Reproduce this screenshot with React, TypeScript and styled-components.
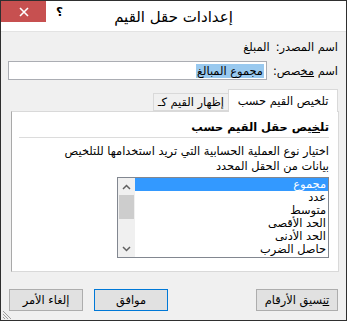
import React from 'react';
import styled, { createGlobalStyle, css } from 'styled-components';

const GlobalStyle = createGlobalStyle`
  html, body {
    margin: 0;
    padding: 0;
    background: #ffffff;
  }
  * {
    box-sizing: border-box;
  }
`;

const fontStack = `"DejaVu Sans", "Noto Sans", sans-serif`;

const Window = styled.div`
  width: 347px;
  height: 321px;
  border: 1px solid #2f2f2f;
  background: #f0f0f0;
  display: flex;
  flex-direction: column;
  font-family: ${fontStack};
  font-size: 11.4px;
  color: #000;
  position: relative;
  overflow: hidden;
`;

const TitleBar = styled.div`
  height: 30px;
  background: #ffffff;
  display: grid;
  grid-template-columns: 1fr auto 1fr;
  align-items: start;
  direction: ltr;
`;

const TitleButtons = styled.div`
  display: flex;
  align-items: flex-start;
`;

const CloseButton = styled.div`
  width: 45px;
  height: 21px;
  background: #c75050;
  display: flex;
  align-items: center;
  justify-content: center;
`;

const HelpButton = styled.div`
  width: 26px;
  height: 21px;
  display: flex;
  align-items: center;
  justify-content: center;
  font-weight: bold;
  font-size: 12px;
  padding-left: 1px;
`;

const Title = styled.div`
  direction: rtl;
  font-size: 15px;
  line-height: 20px;
  margin-top: 6px;
  color: #000;
`;

const Body = styled.div`
  flex: 1;
  direction: rtl;
  display: flex;
  flex-direction: column;
  border-top: 1px solid #e3e3e3;
`;

const Row = styled.div<{ $top: number }>`
  display: flex;
  align-items: center;
  margin-top: ${(p) => p.$top}px;
  padding-right: 8px;
  padding-left: 7px;
  gap: 6px;
  line-height: 14px;
`;

const Label = styled.span`
  white-space: nowrap;
`;

const Mnemonic = styled.span`
  text-decoration: underline;
`;

const TextInput = styled.div`
  flex: 1;
  height: 19px;
  background: #fff;
  border: 1px solid #abadb3;
  display: flex;
  align-items: center;
  padding-right: 2px;
`;

const Selected = styled.span`
  background: #99c9ef;
  line-height: 14px;
  padding: 0 1px;
`;

const TabStrip = styled.div`
  display: flex;
  align-items: flex-end;
  margin-top: 9px;
  padding-right: 8px;
  height: 22px;
  position: relative;
  z-index: 1;
`;

const Tab = styled.div<{ $active?: boolean }>`
  border: 1px solid #d9d9d9;
  border-bottom: none;
  display: flex;
  align-items: center;
  justify-content: center;
  white-space: nowrap;
  ${(p) =>
    p.$active
      ? css`
          width: 110px;
          height: 23px;
          margin-bottom: -1px;
          background: #fff;
        `
      : css`
          width: 75px;
          height: 18px;
          background: #f0f0f0;
          border-color: #d9d9d9;
          border-right: none;
          border-bottom: 1px solid #d9d9d9;
        `}
`;

const Panel = styled.div`
  margin: 0 7px 0 10px;
  height: 161px;
  background: #fff;
  border: 1px solid #d9d9d9;
  border-left-color: #a9a9a9;
  padding: 8px 9px 0 7px;
  display: flex;
  flex-direction: column;
`;

const Heading = styled.div`
  font-weight: bold;
  line-height: 15px;
  padding-bottom: 2px;
  border-bottom: 1px solid #dcdcdc;
`;

const Description = styled.div`
  margin-top: 6px;
  line-height: 15px;
`;

const ListBox = styled.div`
  margin-top: 3px;
  width: 212px;
  height: 81px;
  border: 1px solid #828790;
  display: flex;
  background: #fff;
`;

const Items = styled.div`
  flex: 1;
  display: flex;
  flex-direction: column;
`;

const Item = styled.div<{ $selected?: boolean }>`
  height: 13px;
  line-height: 13px;
  padding-right: 2px;
  white-space: nowrap;
  ${(p) =>
    p.$selected &&
    css`
      background: #3399ff;
      color: #fff;
    `}
`;

const ScrollBar = styled.div`
  width: 17px;
  background: #f0f0f0;
  display: flex;
  flex-direction: column;
  align-items: center;
`;

const ScrollArrow = styled.div`
  height: 17px;
  width: 17px;
  display: flex;
  align-items: center;
  justify-content: center;
`;

const ScrollThumb = styled.div`
  width: 15px;
  height: 24px;
  background: #cdcdcd;
`;

const ScrollSpace = styled.div`
  flex: 1;
`;

const Footer = styled.div`
  display: flex;
  align-items: center;
  margin-top: 17px;
  padding-right: 8px;
  padding-left: 8px;
  gap: 11px;
`;

const Button = styled.div<{ $width: number; $default?: boolean }>`
  width: ${(p) => p.$width}px;
  height: 22px;
  background: #e1e1e1;
  border: 1px solid ${(p) => (p.$default ? '#0078d7' : '#adadad')};
  display: flex;
  align-items: center;
  justify-content: center;
  white-space: nowrap;
`;

const Spacer = styled.div`
  flex: 1;
`;

const Grip = styled.div`
  position: absolute;
  left: 1px;
  bottom: 1px;
  width: 10px;
  height: 10px;
`;

const items = ['مجموع', 'عدد', 'متوسط', 'الحد الأقصى', 'الحد الأدنى', 'حاصل الضرب'];

export default function App() {
  return (
    <>
      <GlobalStyle />
      <Window>
        <TitleBar>
          <TitleButtons>
            <CloseButton>
              <svg width="10" height="10" viewBox="0 0 10 10">
                <path d="M1 1 L9 9 M9 1 L1 9" stroke="#fff" strokeWidth="1.6" />
              </svg>
            </CloseButton>
            <HelpButton>؟</HelpButton>
          </TitleButtons>
          <Title>إعدادات حقل القيم</Title>
          <div />
        </TitleBar>
        <Body>
          <Row $top={8}>
            <Label>اسم المصدر:</Label>
            <Label>المبلغ</Label>
          </Row>
          <Row $top={7}>
            <Label>
              اسم <Mnemonic>مخ</Mnemonic>صص:
            </Label>
            <TextInput>
              <Selected>مجموع المبالغ</Selected>
            </TextInput>
          </Row>
          <TabStrip>
            <Tab $active>تلخيص القيم حسب</Tab>
            <Tab>إظهار القيم كـ</Tab>
          </TabStrip>
          <Panel>
            <Heading>
              تل<Mnemonic>خ</Mnemonic>يص حقل القيم حسب
            </Heading>
            <Description>
              اختيار نوع العملية الحسابية التي تريد استخدامها للتلخيص
              <br />
              بيانات من الحقل المحدد
            </Description>
            <ListBox>
              <Items>
                {items.map((t, i) => (
                  <Item key={t} $selected={i === 0}>
                    {t}
                  </Item>
                ))}
              </Items>
              <ScrollBar>
                <ScrollArrow>
                  <svg width="9" height="6" viewBox="0 0 9 6">
                    <path d="M1 5 L4.5 1.5 L8 5" stroke="#606060" strokeWidth="1.5" fill="none" />
                  </svg>
                </ScrollArrow>
                <ScrollThumb />
                <ScrollSpace />
                <ScrollArrow>
                  <svg width="9" height="6" viewBox="0 0 9 6">
                    <path d="M1 1 L4.5 4.5 L8 1" stroke="#606060" strokeWidth="1.5" fill="none" />
                  </svg>
                </ScrollArrow>
              </ScrollBar>
            </ListBox>
          </Panel>
          <Footer>
            <Button $width={82}>
              <span>
                <Mnemonic>تن</Mnemonic>سيق الأرقام
              </span>
            </Button>
            <Spacer />
            <Button $width={74} $default>
              موافق
            </Button>
            <Button $width={74}>إلغاء الأمر</Button>
          </Footer>
          <Grip>
            <svg width="10" height="10" viewBox="0 0 10 10">
              <path d="M1 1 L9 9 M1 4 L6 9 M1 7 L3 9" stroke="#a0a0a0" strokeWidth="1" />
            </svg>
          </Grip>
        </Body>
      </Window>
    </>
  );
}
